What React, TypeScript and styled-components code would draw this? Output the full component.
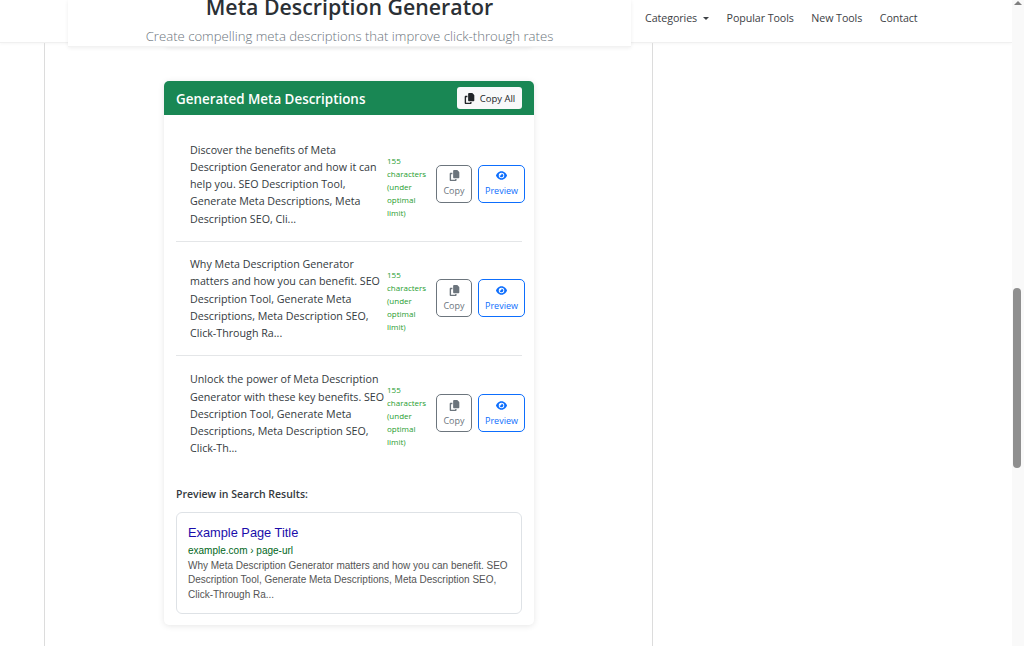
import * as React from "react";
import styled, { createGlobalStyle } from "styled-components";
import { FaCopy, FaEye } from "react-icons/fa6";

const GlobalStyle = createGlobalStyle`
  html, body { margin: 0; padding: 0; background: #fff; overflow: hidden; }
  * { box-sizing: border-box; }
  body { font-family: "Open Sans", "Noto Sans", sans-serif; color: #212529; }
`;

const Page = styled.div`
  display: flex;
  width: 1024px;
  height: 646px;
  overflow: hidden;
`;

const Main = styled.div`
  position: relative;
  width: 1012px;
  display: flex;
  flex-direction: column;
`;

const Navbar = styled.nav`
  height: 43px;
  flex: none;
  display: flex;
  align-items: center;
  gap: 17.5px;
  padding: 0 0 6px 645px;
  background: #fff;
  border-bottom: 1px solid #f0f0f0;
  box-shadow: 0 1px 3px rgba(0, 0, 0, 0.04);
`;

const NavLink = styled.a`
  display: inline-flex;
  align-items: center;
  font-size: 10.7px;
  letter-spacing: -0.08px;
  color: #3d4145;
`;

const Caret = styled.span`
  width: 0;
  height: 0;
  margin-left: 6px;
  border-top: 3px solid #3d4145;
  border-left: 3px solid transparent;
  border-right: 3px solid transparent;
`;

/* shadow edge of the card scrolled underneath the fixed title */
const ScrolledCard = styled.div`
  position: absolute;
  top: 0;
  left: 164px;
  width: 370px;
  height: 47px;
  border-radius: 6px;
  box-shadow: 0 1px 5px rgba(0, 0, 0, 0.06);
`;

const TitleOverlay = styled.header`
  position: absolute;
  top: 0;
  left: 68px;
  width: 563px;
  height: 47px;
  background: #fff;
  border-bottom: 1px solid #f2f2f2;
  box-shadow: 0 1px 4px rgba(0, 0, 0, 0.07);
  text-align: center;
  overflow: hidden;
`;

const Title = styled.h1`
  margin: -7px 0 0;
  font-size: 21.3px;
  line-height: 28px;
  font-weight: 600;
  color: #2b3035;
`;

const Subtitle = styled.p`
  margin: 6px 0 0;
  font-size: 13.15px;
  line-height: 18px;
  font-weight: 300;
  color: #6c757d;
`;

const Column = styled.main`
  flex: 1;
  margin-left: 44px;
  width: 609px;
  padding: 38px 0 0 119px;
  border-left: 1px solid #dcdcdc;
  border-right: 1px solid #dcdcdc;
`;

const Card = styled.section`
  width: 370px;
  height: 544px;
  border-radius: 5px;
  background: #fff;
  box-shadow: 0 1px 6px rgba(0, 0, 0, 0.1);
  overflow: hidden;
`;

const CardHeader = styled.div`
  height: 34px;
  padding: 0 12px;
  display: flex;
  align-items: center;
  justify-content: space-between;
  background: #198754;
`;

const CardTitle = styled.h2`
  margin: 1px 0 0;
  font-size: 13.4px;
  font-weight: 600;
  color: #fff;
`;

const CopyAll = styled.button`
  width: 65px;
  height: 22px;
  padding: 0;
  display: inline-flex;
  align-items: center;
  justify-content: center;
  gap: 5px;
  border: 0;
  border-radius: 3px;
  background: #f8f9fa;
  font: 9.5px "Open Sans", sans-serif;
  color: #212529;
`;

const CardBody = styled.div`
  padding: 12px 12px 0;
`;

const Item = styled.div<{ $last?: boolean }>`
  height: 114.6px;
  display: flex;
  align-items: center;
  border-bottom: ${(p) => (p.$last ? "0" : "1px solid #e4e6e8")};
`;

const ItemText = styled.p`
  width: 197px;
  flex: none;
  margin: 2px 0 0 14px;
  font-size: 10.7px;
  line-height: 17.3px;
  color: #343a40;
  white-space: pre-line;
`;

const CharNote = styled.span`
  width: 49px;
  flex: none;
  margin-top: 5px;
  font-size: 8px;
  line-height: 13px;
  color: #1f9d2f;
  white-space: pre-line;
`;

const ActionButton = styled.button<{ $primary?: boolean; $width: number }>`
  width: ${(p) => p.$width}px;
  height: 38px;
  flex: none;
  margin-right: 6px;
  padding: 0;
  display: flex;
  flex-direction: column;
  align-items: center;
  justify-content: center;
  gap: 3px;
  border: 1px solid ${(p) => (p.$primary ? "#0d6efd" : "#6c757d")};
  border-radius: 5px;
  background: #fff;
  font: 9px "Open Sans", sans-serif;
  color: ${(p) => (p.$primary ? "#0d6efd" : "#6c757d")};
`;

const PreviewLabel = styled.h3`
  margin: 16px 0 11px;
  font-size: 10.5px;
  line-height: 14px;
  font-weight: 600;
  color: #343a40;
`;

const ResultBox = styled.div`
  height: 102px;
  padding: 11px;
  border: 1px solid #dee2e6;
  border-radius: 6px;
  font-family: "Liberation Sans", Arial, sans-serif;
`;

const ResultTitle = styled.div`
  font-size: 12.8px;
  line-height: 18px;
  color: #1a0dab;
`;

const ResultUrl = styled.div`
  margin-top: 2px;
  font-size: 10px;
  line-height: 14px;
  color: #006621;
`;

const ResultText = styled.div`
  margin-top: 1px;
  font-size: 10px;
  line-height: 14.4px;
  color: #545454;
  white-space: pre-line;
`;

const Scrollbar = styled.div`
  position: relative;
  width: 12px;
  flex: none;
  background: #f9f9f9;
`;

const ScrollArrow = styled.span`
  position: absolute;
  top: 1px;
  left: 2px;
  border-bottom: 4px solid #7f7f7f;
  border-left: 4px solid transparent;
  border-right: 4px solid transparent;
`;

const ScrollThumb = styled.span`
  position: absolute;
  top: 288px;
  left: 1px;
  width: 8px;
  height: 180px;
  border-radius: 4px;
  background: #8f8f8f;
`;

const items = [
  "Discover the benefits of Meta\nDescription Generator and how it can\nhelp you. SEO Description Tool,\nGenerate Meta Descriptions, Meta\nDescription SEO, Cli...",
  "Why Meta Description Generator\nmatters and how you can benefit. SEO\nDescription Tool, Generate Meta\nDescriptions, Meta Description SEO,\nClick-Through Ra...",
  "Unlock the power of Meta Description\nGenerator with these key benefits. SEO\nDescription Tool, Generate Meta\nDescriptions, Meta Description SEO,\nClick-Th...",
];

export default function App() {
  return (
    <Page>
      <GlobalStyle />
      <Main>
        <Navbar>
          <NavLink>
            Categories
            <Caret />
          </NavLink>
          <NavLink>Popular Tools</NavLink>
          <NavLink>New Tools</NavLink>
          <NavLink>Contact</NavLink>
        </Navbar>
        <ScrolledCard />
        <TitleOverlay>
          <Title>Meta Description Generator</Title>
          <Subtitle>Create compelling meta descriptions that improve click-through rates</Subtitle>
        </TitleOverlay>
        <Column>
          <Card>
            <CardHeader>
              <CardTitle>Generated Meta Descriptions</CardTitle>
              <CopyAll>
                <FaCopy size={11} />
                Copy All
              </CopyAll>
            </CardHeader>
            <CardBody>
              {items.map((text, i) => (
                <Item key={i} $last={i === items.length - 1}>
                  <ItemText>{text}</ItemText>
                  <CharNote>{"155\ncharacters\n(under\noptimal\nlimit)"}</CharNote>
                  <ActionButton $width={36}>
                    <FaCopy size={11} />
                    Copy
                  </ActionButton>
                  <ActionButton $primary $width={47}>
                    <FaEye size={11} />
                    Preview
                  </ActionButton>
                </Item>
              ))}
              <PreviewLabel>Preview in Search Results:</PreviewLabel>
              <ResultBox>
                <ResultTitle>Example Page Title</ResultTitle>
                <ResultUrl>example.com › page-url</ResultUrl>
                <ResultText>
                  {"Why Meta Description Generator matters and how you can benefit. SEO\nDescription Tool, Generate Meta Descriptions, Meta Description SEO,\nClick-Through Ra..."}
                </ResultText>
              </ResultBox>
            </CardBody>
          </Card>
        </Column>
      </Main>
      <Scrollbar>
        <ScrollArrow />
        <ScrollThumb />
      </Scrollbar>
    </Page>
  );
}
